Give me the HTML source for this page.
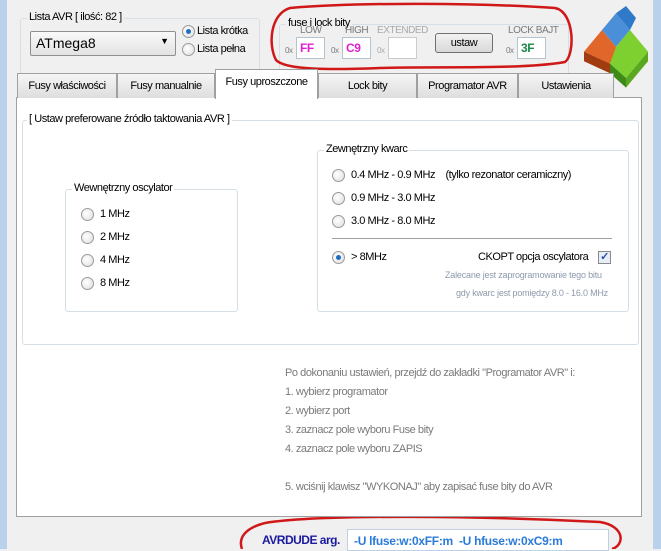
<!DOCTYPE html>
<html><head><meta charset="utf-8"><style>
*{box-sizing:border-box;margin:0;padding:0}
body{width:661px;height:549px;position:relative;overflow:hidden;background:#f0f0f0;font-family:"Liberation Sans",sans-serif;font-size:11px;letter-spacing:-0.45px;color:#000}
.a{position:absolute;white-space:nowrap}
.gb{position:absolute;border:1px solid #d5dfe5;border-radius:3px}
.gl{position:absolute;background:#f0f0f0;padding:0 2px;top:-8px;left:6px}
.w .gl{background:#fff}
.rd{position:absolute;width:13px;height:13px;border-radius:50%;border:1px solid #9a9a9a;background:radial-gradient(circle at 40% 40%,#fff,#ddd)}
.rd.on::after{content:"";position:absolute;left:3px;top:3px;width:5px;height:5px;border-radius:50%;background:#1e6fc4}
.tab{position:absolute;top:73px;height:25px;border:1px solid #a0a0a0;border-bottom:none;background:linear-gradient(#f6f6f6,#dedede);text-align:center;line-height:24px}
.tb{position:absolute;background:#fff;border:1px solid #b5c3cf;height:22px}
.g{color:#7a7a7a}
</style></head><body>
<div class="a" style="left:0;top:0;width:7px;height:549px;background:#b9d1ea"></div>
<div class="a" style="left:653px;top:0;width:8px;height:549px;background:#b9d1ea"></div>

<div class="gb" style="left:20px;top:18px;width:240px;height:65px"><span class="gl">Lista AVR [ ilość: 82 ]</span></div>
<div class="a" style="left:30px;top:31px;width:146px;height:25px;border:1px solid #8e8f8f;border-radius:2px;background:linear-gradient(#fafafa,#e3e3e3);font-size:14px;letter-spacing:0;padding:3px 5px">ATmega8<span style="position:absolute;right:6px;top:4px;font-size:9px">▼</span></div>
<div class="rd on" style="left:182px;top:25px"></div><div class="a" style="left:197px;top:25px">Lista krótka</div>
<div class="rd" style="left:182px;top:43px"></div><div class="a" style="left:197px;top:43px">Lista pełna</div>

<div class="gb" style="left:279px;top:24px;width:290px;height:55px"><span class="gl">fuse i lock bity</span></div>
<div class="a g" style="left:300px;top:25px;font-size:10px">LOW</div>
<div class="a g" style="left:345px;top:25px;font-size:10px">HIGH</div>
<div class="a" style="left:377px;top:25px;font-size:10px;color:#aaa">EXTENDED</div>
<div class="a g" style="left:508px;top:25px;font-size:10px">LOCK BAJT</div>
<div class="a g" style="left:285px;top:46px;font-size:8px">0x</div>
<div class="tb" style="left:296px;top:37px;width:29px;color:#e020d0;font-weight:bold;font-size:12px;padding:3px">FF</div>
<div class="a g" style="left:331px;top:46px;font-size:8px">0x</div>
<div class="tb" style="left:342px;top:37px;width:29px;color:#e020d0;font-weight:bold;font-size:12px;padding:3px">C9</div>
<div class="a" style="left:377px;top:46px;font-size:8px;color:#aaa">0x</div>
<div class="tb" style="left:388px;top:37px;width:29px;border-color:#ccc"></div>
<div class="a" style="left:435px;top:33px;width:58px;height:20px;border:1px solid #707070;border-radius:3px;background:linear-gradient(#f2f2f2,#d8d8d8);text-align:center;line-height:18px">ustaw</div>
<div class="a g" style="left:506px;top:46px;font-size:8px">0x</div>
<div class="tb" style="left:517px;top:37px;width:29px;color:#1a8a4a;font-weight:bold;font-size:12px;padding:3px">3F</div>

<svg class="a" style="left:580px;top:6px" width="72" height="84" viewBox="0 0 72 70" preserveAspectRatio="none">
<path d="M4 38 L22 20 L40 38 L30 48 Z" fill="#e0662a"/>
<path d="M22 20 L36 6 L50 20 L36 34 Z" fill="#4a8fd8"/>
<path d="M36 6 L46 0 L56 10 L50 20 Z" fill="#2f7ac8"/>
<path d="M36 34 L50 20 L68 38 L46 60 L30 48 Z" fill="#7dd030"/>
<path d="M30 48 L46 60 L46 68 L30 56 Z" fill="#3e8a18"/>
<path d="M46 60 L68 38 L68 46 L46 68 Z" fill="#5aa820"/>
<path d="M4 38 L30 48 L30 56 L4 46 Z" fill="#a03c10"/>
</svg>

<svg class="a" style="left:0;top:0" width="661" height="549">
<path d="M290 8 C360 2 480 3 555 8 C575 12 575 55 565 62 C520 70 430 66 380 68 C330 70 285 70 276 60 C268 45 270 14 290 8 Z" fill="none" stroke="#d01818" stroke-width="2.5"/>
<path d="M265 523 C320 514 480 516 600 522 C625 526 625 545 612 549 M242 549 C238 538 245 528 265 523" fill="none" stroke="#d01818" stroke-width="2.5"/>
</svg>

<div class="a" style="left:16px;top:97px;width:626px;height:420px;background:#fff;border:1px solid #a0a0a0"></div>
<div class="tab" style="left:17px;width:100px">Fusy właściwości</div>
<div class="tab" style="left:117px;width:98px">Fusy manualnie</div>
<div class="tab" style="left:215px;top:69px;height:30px;width:103px;background:#fff;z-index:2">Fusy uproszczone</div>
<div class="tab" style="left:318px;width:99px">Lock bity</div>
<div class="tab" style="left:417px;width:101px">Programator AVR</div>
<div class="tab" style="left:518px;width:96px">Ustawienia</div>

<div class="gb w" style="left:22px;top:120px;width:617px;height:225px"><span class="gl" style="left:4px">[ Ustaw preferowane źródło taktowania AVR ]</span></div>
<div class="gb w" style="left:65px;top:189px;width:173px;height:123px"><span class="gl">Wewnętrzny oscylator</span></div>
<div class="rd" style="left:81px;top:208px"></div><div class="a" style="left:100px;top:208px">1 MHz</div>
<div class="rd" style="left:81px;top:231px"></div><div class="a" style="left:100px;top:231px">2 MHz</div>
<div class="rd" style="left:81px;top:254px"></div><div class="a" style="left:100px;top:254px">4 MHz</div>
<div class="rd" style="left:81px;top:277px"></div><div class="a" style="left:100px;top:277px">8 MHz</div>

<div class="gb w" style="left:317px;top:150px;width:312px;height:162px"><span class="gl">Zewnętrzny kwarc</span></div>
<div class="rd" style="left:332px;top:169px"></div><div class="a" style="left:351px;top:169px">0.4 MHz - 0.9 MHz &nbsp;&nbsp;&nbsp;(tylko rezonator ceramiczny)</div>
<div class="rd" style="left:332px;top:192px"></div><div class="a" style="left:351px;top:192px">0.9 MHz - 3.0 MHz</div>
<div class="rd" style="left:332px;top:215px"></div><div class="a" style="left:351px;top:215px">3.0 MHz - 8.0 MHz</div>
<div class="a" style="left:332px;top:238px;width:280px;height:1px;background:#a0a0a0"></div>
<div class="rd on" style="left:332px;top:251px"></div><div class="a" style="left:351px;top:251px">&gt; 8MHz</div>
<div class="a" style="left:478px;top:251px">CKOPT opcja oscylatora</div>
<div class="a" style="left:598px;top:251px;width:13px;height:13px;border:1px solid #8a8a8a;background:#e8eef8;color:#2a50a8;font-size:11px;line-height:11px;text-align:center;font-weight:bold">✓</div>
<div class="a" style="left:445px;top:270px;font-size:9px;color:#8d9aaa;letter-spacing:-0.2px">Zalecane jest zaprogramowanie tego bitu</div>
<div class="a" style="left:456px;top:288px;font-size:9px;color:#8d9aaa;letter-spacing:-0.2px">gdy kwarc jest pomiędzy 8.0 - 16.0 MHz</div>

<div class="a g" style="left:285px;top:367px">Po dokonaniu ustawień, przejdź do zakładki "Programator AVR" i:</div>
<div class="a g" style="left:285px;top:386px">1. wybierz programator</div>
<div class="a g" style="left:285px;top:405px">2. wybierz port</div>
<div class="a g" style="left:285px;top:424px">3. zaznacz pole wyboru Fuse bity</div>
<div class="a g" style="left:285px;top:443px">4. zaznacz pole wyboru ZAPIS</div>
<div class="a g" style="left:285px;top:481px">5. wciśnij klawisz "WYKONAJ" aby zapisać fuse bity do AVR</div>

<div class="a" style="left:262px;top:533px;font-weight:bold;color:#1a1aa0;font-size:12px;letter-spacing:-0.5px">AVRDUDE arg.</div>
<div class="a" style="left:347px;top:529px;width:262px;height:22px;background:#fff;border:1px solid #c0d0e0;color:#2a7ad8;font-weight:bold;font-size:12px;letter-spacing:-0.3px;padding:4px 6px">-U lfuse:w:0xFF:m &nbsp;-U hfuse:w:0xC9:m</div>
</body></html>
